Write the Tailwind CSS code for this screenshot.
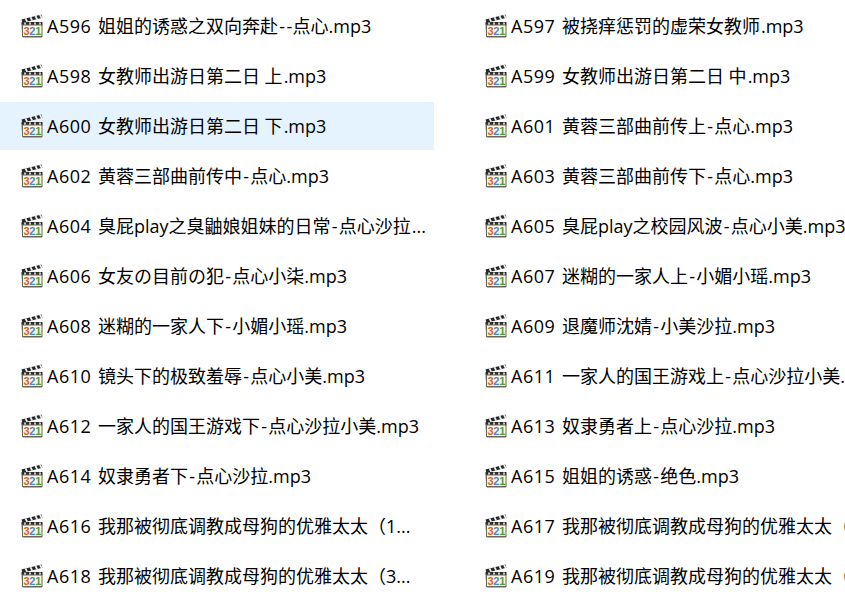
<!DOCTYPE html>
<html lang="zh"><head><meta charset="utf-8">
<script src="https://cdn.jsdelivr.net/npm/@tailwindcss/browser@4"></script>
</head>
<body class="bg-white overflow-hidden">
<svg width="0" height="0" class="absolute"><defs><symbol id="ic" viewBox="0 0 24 24">
<path d="M1 12 L3 24 L22 24 L22 20 Z" fill="#777" opacity=".55"/>
<path d="M1.5 5.5 L21.5 0.5 L22.5 3.8 L2.5 8.8 Z" fill="#262626"/>
<path d="M5.5 4.4 L7.2 7.8 M10.5 3.2 L12.2 6.6 M15.5 2 L17.2 5.4 M20 .9 L21.7 4.2" stroke="#efefef" stroke-width="1.8"/>
<rect x="1.5" y="8" width="21" height="3.5" fill="#2e2e2e"/>
<path d="M5 8.4 v2.8 M10 8.4 v2.8 M15 8.4 v2.8 M20 8.4 v2.8" stroke="#e2e2e2" stroke-width="1.7"/>
<rect x="2.5" y="11" width="19.5" height="11.5" fill="#fdf6e0" stroke="#6a6558"/>
<text x="3.4" y="21.4" font-family="Liberation Sans" font-weight="700" font-size="11" fill="#d4622a">3</text>
<text x="9.2" y="21.4" font-family="Liberation Sans" font-weight="700" font-size="11" fill="#4a86d6">2</text>
<text x="15.2" y="21.4" font-family="Liberation Sans" font-weight="700" font-size="11" fill="#4f9e38">1</text>
</symbol></defs></svg>
<div class="grid grid-cols-[434px_434px] gap-x-[30px] gap-y-[2px] w-[898px] pt-[2px] text-[18px] leading-[48px] text-black font-['Open_Sans','Noto_Sans_CJK_SC',sans-serif]">
<div class="flex items-center h-[48px] pl-[20px] gap-[3px] whitespace-nowrap"><svg class="w-[24px] h-[24px] shrink-0"><use href="#ic"/></svg><span><span class="tracking-[0.5px] mr-[2px]">A596</span> 姐姐的诱惑之双向奔赴<span class="mx-[1.25px]">-</span><span class="mx-[0.25px]">-</span>点心.mp3</span></div>
<div class="flex items-center h-[48px] pl-[20px] gap-[3px] whitespace-nowrap"><svg class="w-[24px] h-[24px] shrink-0"><use href="#ic"/></svg><span><span class="tracking-[0.5px] mr-[2px]">A597</span> 被挠痒惩罚的虚荣女教师<span class="ml-[1px]">.mp3</span></span></div>
<div class="flex items-center h-[48px] pl-[20px] gap-[3px] whitespace-nowrap"><svg class="w-[24px] h-[24px] shrink-0"><use href="#ic"/></svg><span><span class="tracking-[0.5px] mr-[2px]">A598</span> 女教师出游日第二日 上<span class="ml-[1px]">.mp3</span></span></div>
<div class="flex items-center h-[48px] pl-[20px] gap-[3px] whitespace-nowrap"><svg class="w-[24px] h-[24px] shrink-0"><use href="#ic"/></svg><span><span class="tracking-[0.5px] mr-[2px]">A599</span> 女教师出游日第二日 中<span class="ml-[1px]">.mp3</span></span></div>
<div class="flex items-center h-[48px] pl-[20px] gap-[3px] whitespace-nowrap bg-[#e5f3ff]"><svg class="w-[24px] h-[24px] shrink-0"><use href="#ic"/></svg><span><span class="tracking-[0.5px] mr-[2px]">A600</span> 女教师出游日第二日 下<span class="ml-[1px]">.mp3</span></span></div>
<div class="flex items-center h-[48px] pl-[20px] gap-[3px] whitespace-nowrap"><svg class="w-[24px] h-[24px] shrink-0"><use href="#ic"/></svg><span><span class="tracking-[0.5px] mr-[2px]">A601</span> 黄蓉三部曲前传上<span class="mx-[1.25px]">-</span>点心.mp3</span></div>
<div class="flex items-center h-[48px] pl-[20px] gap-[3px] whitespace-nowrap"><svg class="w-[24px] h-[24px] shrink-0"><use href="#ic"/></svg><span><span class="tracking-[0.5px] mr-[2px]">A602</span> 黄蓉三部曲前传中<span class="mx-[1.25px]">-</span>点心.mp3</span></div>
<div class="flex items-center h-[48px] pl-[20px] gap-[3px] whitespace-nowrap"><svg class="w-[24px] h-[24px] shrink-0"><use href="#ic"/></svg><span><span class="tracking-[0.5px] mr-[2px]">A603</span> 黄蓉三部曲前传下<span class="mx-[1.25px]">-</span>点心.mp3</span></div>
<div class="flex items-center h-[48px] pl-[20px] gap-[3px] whitespace-nowrap"><svg class="w-[24px] h-[24px] shrink-0"><use href="#ic"/></svg><span><span class="tracking-[0.5px] mr-[2px]">A604</span> 臭屁play之臭鼬娘姐妹的日常<span class="mx-[1.25px]">-</span>点心沙拉<span class="ml-[1px]">...</span></span></div>
<div class="flex items-center h-[48px] pl-[20px] gap-[3px] whitespace-nowrap"><svg class="w-[24px] h-[24px] shrink-0"><use href="#ic"/></svg><span><span class="tracking-[0.5px] mr-[2px]">A605</span> 臭屁play之校园风波<span class="mx-[1.25px]">-</span>点心小美.mp3</span></div>
<div class="flex items-center h-[48px] pl-[20px] gap-[3px] whitespace-nowrap"><svg class="w-[24px] h-[24px] shrink-0"><use href="#ic"/></svg><span><span class="tracking-[0.5px] mr-[2px]">A606</span> 女友の目前の犯<span class="mx-[1.25px]">-</span>点心小柒.mp3</span></div>
<div class="flex items-center h-[48px] pl-[20px] gap-[3px] whitespace-nowrap"><svg class="w-[24px] h-[24px] shrink-0"><use href="#ic"/></svg><span><span class="tracking-[0.5px] mr-[2px]">A607</span> 迷糊的一家人上<span class="mx-[1.25px]">-</span>小媚小瑶.mp3</span></div>
<div class="flex items-center h-[48px] pl-[20px] gap-[3px] whitespace-nowrap"><svg class="w-[24px] h-[24px] shrink-0"><use href="#ic"/></svg><span><span class="tracking-[0.5px] mr-[2px]">A608</span> 迷糊的一家人下<span class="mx-[1.25px]">-</span>小媚小瑶.mp3</span></div>
<div class="flex items-center h-[48px] pl-[20px] gap-[3px] whitespace-nowrap"><svg class="w-[24px] h-[24px] shrink-0"><use href="#ic"/></svg><span><span class="tracking-[0.5px] mr-[2px]">A609</span> 退魔师沈婧<span class="mx-[1.25px]">-</span>小美沙拉.mp3</span></div>
<div class="flex items-center h-[48px] pl-[20px] gap-[3px] whitespace-nowrap"><svg class="w-[24px] h-[24px] shrink-0"><use href="#ic"/></svg><span><span class="tracking-[0.5px] mr-[2px]">A610</span> 镜头下的极致羞辱<span class="mx-[1.25px]">-</span>点心小美.mp3</span></div>
<div class="flex items-center h-[48px] pl-[20px] gap-[3px] whitespace-nowrap"><svg class="w-[24px] h-[24px] shrink-0"><use href="#ic"/></svg><span><span class="tracking-[0.5px] mr-[2px]">A611</span> 一家人的国王游戏上<span class="mx-[1.25px]">-</span>点心沙拉小美.mp3</span></div>
<div class="flex items-center h-[48px] pl-[20px] gap-[3px] whitespace-nowrap"><svg class="w-[24px] h-[24px] shrink-0"><use href="#ic"/></svg><span><span class="tracking-[0.5px] mr-[2px]">A612</span> 一家人的国王游戏下<span class="mx-[1.25px]">-</span>点心沙拉小美.mp3</span></div>
<div class="flex items-center h-[48px] pl-[20px] gap-[3px] whitespace-nowrap"><svg class="w-[24px] h-[24px] shrink-0"><use href="#ic"/></svg><span><span class="tracking-[0.5px] mr-[2px]">A613</span> 奴隶勇者上<span class="mx-[1.25px]">-</span>点心沙拉.mp3</span></div>
<div class="flex items-center h-[48px] pl-[20px] gap-[3px] whitespace-nowrap"><svg class="w-[24px] h-[24px] shrink-0"><use href="#ic"/></svg><span><span class="tracking-[0.5px] mr-[2px]">A614</span> 奴隶勇者下<span class="mx-[1.25px]">-</span>点心沙拉.mp3</span></div>
<div class="flex items-center h-[48px] pl-[20px] gap-[3px] whitespace-nowrap"><svg class="w-[24px] h-[24px] shrink-0"><use href="#ic"/></svg><span><span class="tracking-[0.5px] mr-[2px]">A615</span> 姐姐的诱惑<span class="mx-[1.25px]">-</span>绝色.mp3</span></div>
<div class="flex items-center h-[48px] pl-[20px] gap-[3px] whitespace-nowrap"><svg class="w-[24px] h-[24px] shrink-0"><use href="#ic"/></svg><span><span class="tracking-[0.5px] mr-[2px]">A616</span> 我那被彻底调教成母狗的优雅太太（1...</span></div>
<div class="flex items-center h-[48px] pl-[20px] gap-[3px] whitespace-nowrap"><svg class="w-[24px] h-[24px] shrink-0"><use href="#ic"/></svg><span><span class="tracking-[0.5px] mr-[2px]">A617</span> 我那被彻底调教成母狗的优雅太太（2...</span></div>
<div class="flex items-center h-[48px] pl-[20px] gap-[3px] whitespace-nowrap"><svg class="w-[24px] h-[24px] shrink-0"><use href="#ic"/></svg><span><span class="tracking-[0.5px] mr-[2px]">A618</span> 我那被彻底调教成母狗的优雅太太（3...</span></div>
<div class="flex items-center h-[48px] pl-[20px] gap-[3px] whitespace-nowrap"><svg class="w-[24px] h-[24px] shrink-0"><use href="#ic"/></svg><span><span class="tracking-[0.5px] mr-[2px]">A619</span> 我那被彻底调教成母狗的优雅太太（4...</span></div>
</div>
</body></html>
